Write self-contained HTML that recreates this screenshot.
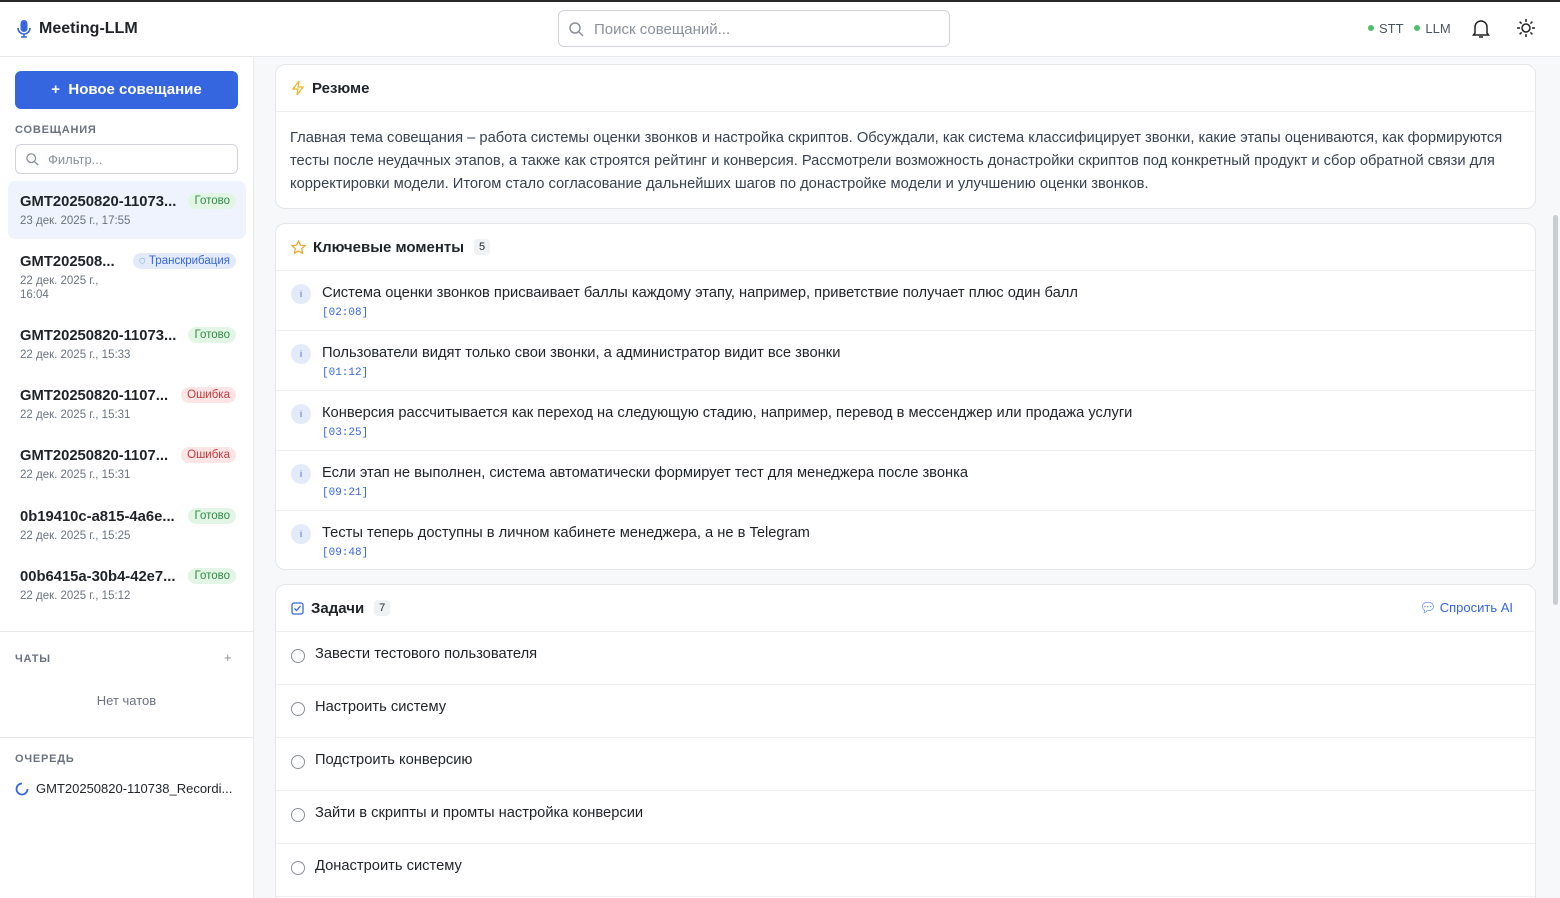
<!DOCTYPE html>
<html style="width:1560px;height:898px;overflow:hidden"><head><meta charset="utf-8"><style>
*{box-sizing:border-box;margin:0;padding:0}
body{width:1560px;height:898px;overflow:hidden;font-family:"Liberation Sans",sans-serif;background:#f7f8fa;color:#1f2328;position:relative}
.topline{position:absolute;left:0;top:0;width:1560px;height:2px;background:#2a2a2a}
.top{position:absolute;left:0;top:2px;width:1560px;height:55px;background:#fff;border-bottom:1px solid #e6e8eb}
.logo{position:absolute;left:17px;top:18px;font-size:16px;font-weight:bold;display:flex;align-items:center;gap:8px}
.search{position:absolute;left:558px;top:8px;width:392px;height:37px;border:1px solid #d0d4da;border-radius:6px;font-size:15px;color:#8a9099;padding:10px 0 0 35px}
.side{position:absolute;left:0;top:57px;width:254px;height:841px;background:#fff;border-right:1px solid #e6e8eb}
.btn{position:absolute;left:15px;top:14px;width:223px;height:38px;background:#3566e0;border-radius:6px;color:#fff;font-size:15px;font-weight:bold;text-align:center;line-height:38px}
.lbl{position:absolute;left:15px;font-size:11px;font-weight:bold;letter-spacing:.8px;color:#6b7280}
.filter{position:absolute;left:15px;top:87px;width:223px;height:30px;border:1px solid #d0d4da;border-radius:6px;font-size:13px;color:#8a9099;padding:7px 0 0 32px}
.item{position:absolute;left:8px;width:238px;height:58px;border-radius:7px}
.item .t{position:absolute;left:12px;top:13px;font-size:14.8px;font-weight:bold;color:#1f2328}
.item .d{position:absolute;left:12px;top:33px;font-size:11.5px;color:#6b7280;line-height:14px}
.badge{position:absolute;top:12px;right:10px;font-size:11.5px;padding:2px 6px;border-radius:9px}
.ok{background:#e3f6e6;color:#2f8a43}.err{background:#fde5e5;color:#c23b3b}.tr{background:#e3ebfb;color:#3566e0}
.card{position:absolute;left:275px;width:1261px;background:#fff;border:1px solid #e4e6ea;border-radius:10px;overflow:hidden}
.hd{height:47px;border-bottom:1px solid #eceef1;display:flex;align-items:center;padding-left:15px;font-size:15px;font-weight:bold;gap:7px;position:relative}
.cnt{font-size:11px;font-weight:normal;background:#f0f1f3;border-radius:4px;padding:2px 5px;margin-left:3px}
.km{height:60px;border-bottom:1px solid #eceef1;position:relative}
.km .i{position:absolute;left:15px;top:13px;width:20px;height:20px;border-radius:50%;background:#e3ebfb;color:#3566e0;font-size:9px;text-align:center;line-height:20px}
.km .x{position:absolute;left:46px;top:14px;font-size:14.7px}
.km .ts{position:absolute;left:46px;top:36px;font-size:11px;font-family:"Liberation Mono",monospace;color:#3566e0}
.task{height:53px;border-bottom:1px solid #eceef1;position:relative}
.task .c{position:absolute;left:15px;top:17px;width:14px;height:14px;border:1.5px solid #8a9099;border-radius:50%}
.task .x{position:absolute;left:39px;top:14px;font-size:14.7px}
</style></head><body>
<div class="topline"></div>
<div class="top">
<div class="logo"><svg width="14" height="18" viewBox="0 0 14 18"><rect x="3.5" y="0" width="7" height="12" rx="3.5" fill="#3566e0"/><path d="M1 8a6 6 0 0 0 12 0M7 14v3M4 17h6" stroke="#3566e0" stroke-width="1.6" fill="none"/></svg>Meeting-LLM</div>
<div class="search"><svg style="position:absolute;left:10px;top:11px" width="15" height="15" viewBox="0 0 15 15"><circle cx="6" cy="6" r="5" stroke="#8a9099" stroke-width="1.5" fill="none"/><path d="M10 10l4 4" stroke="#8a9099" stroke-width="1.5"/></svg>Поиск совещаний...</div>
<div style="position:absolute;left:1368px;top:19px;font-size:13px;color:#4b5563"><span style="display:inline-block;width:6px;height:6px;border-radius:50%;background:#4cc06a;margin-right:5px;vertical-align:2px"></span>STT&nbsp;&nbsp;&nbsp;<span style="display:inline-block;width:6px;height:6px;border-radius:50%;background:#4cc06a;margin-right:5px;vertical-align:2px"></span>LLM</div>
<svg style="position:absolute;left:1472px;top:17px" width="18" height="20" viewBox="0 0 18 20"><path d="M3 14V8a6 6 0 0 1 12 0v6l1.5 2h-15z M7 18h4" stroke="#222" stroke-width="1.5" fill="none"/></svg>
<svg style="position:absolute;left:1516px;top:16px" width="20" height="20" viewBox="0 0 20 20"><circle cx="10" cy="10" r="4" stroke="#222" stroke-width="1.5" fill="none"/><path d="M10 1v3M10 16v3M1 10h3M16 10h3M3.6 3.6l2 2M14.4 14.4l2 2M3.6 16.4l2-2M14.4 5.6l2-2" stroke="#222" stroke-width="1.5"/></svg>
</div>
<div class="side">
<div class="btn">+&nbsp; Новое совещание</div>
<div class="lbl" style="top:67px">СОВЕЩАНИЯ</div>
<div class="filter"><svg style="position:absolute;left:10px;top:8px" width="13" height="13" viewBox="0 0 15 15"><circle cx="6" cy="6" r="5" stroke="#8a9099" stroke-width="1.5" fill="none"/><path d="M10 10l4 4" stroke="#8a9099" stroke-width="1.5"/></svg>Фильтр...</div>
<div class="item" style="top:124px;background:#eef3fd"><div class="t">GMT20250820-11073...</div><div class="d">23 дек. 2025 г., 17:55</div><div class="badge ok">Готово</div></div>
<div class="item" style="top:184px;height:68px"><div class="t">GMT202508...</div><div class="d">22 дек. 2025 г.,<br>16:04</div><div class="badge tr">◌ Транскрибация</div></div>
<div class="item" style="top:258px"><div class="t">GMT20250820-11073...</div><div class="d">22 дек. 2025 г., 15:33</div><div class="badge ok">Готово</div></div>
<div class="item" style="top:318px"><div class="t">GMT20250820-1107...</div><div class="d">22 дек. 2025 г., 15:31</div><div class="badge err">Ошибка</div></div>
<div class="item" style="top:378px"><div class="t">GMT20250820-1107...</div><div class="d">22 дек. 2025 г., 15:31</div><div class="badge err">Ошибка</div></div>
<div class="item" style="top:439px"><div class="t">0b19410c-a815-4a6e...</div><div class="d">22 дек. 2025 г., 15:25</div><div class="badge ok">Готово</div></div>
<div class="item" style="top:499px"><div class="t">00b6415a-30b4-42e7...</div><div class="d">22 дек. 2025 г., 15:12</div><div class="badge ok">Готово</div></div>
<div style="position:absolute;left:0;top:574px;width:253px;border-top:1px solid #e6e8eb"></div>
<div class="lbl" style="top:596px">ЧАТЫ</div><div style="position:absolute;left:224px;top:593px;color:#8a9099;font-size:13px">+</div>
<div style="position:absolute;left:0;width:253px;top:636px;text-align:center;font-size:13px;color:#6b7280">Нет чатов</div>
<div style="position:absolute;left:0;top:680px;width:253px;border-top:1px solid #e6e8eb"></div>
<div class="lbl" style="top:696px">ОЧЕРЕДЬ</div>
<svg style="position:absolute;left:15px;top:725px" width="14" height="14" viewBox="0 0 14 14"><path d="M7 1.5A5.5 5.5 0 1 0 12.5 7" stroke="#3566e0" stroke-width="1.8" fill="none"/></svg>
<div style="position:absolute;left:36px;top:724px;font-size:13px">GMT20250820-110738_Recordi...</div>
</div>
<div class="card" style="top:64px;height:145px">
<div class="hd"><svg width="14" height="16" viewBox="0 0 14 16"><path d="M8 1L2 9h5l-1 6 6-8H7z" stroke="#f0b429" stroke-width="1.3" fill="none"/></svg>Резюме</div>
<div style="padding:15px 15px 0 14px;font-size:14.7px;line-height:23px;color:#374151">Главная тема совещания – работа системы оценки звонков и настройка скриптов. Обсуждали, как система классифицирует звонки, какие этапы оцениваются, как формируются тесты после неудачных этапов, а также как строятся рейтинг и конверсия. Рассмотрели возможность донастройки скриптов под конкретный продукт и сбор обратной связи для корректировки модели. Итогом стало согласование дальнейших шагов по донастройке модели и улучшению оценки звонков.</div>
</div>
<div class="card" style="top:223px;height:347px">
<div class="hd"><svg width="15" height="15" viewBox="0 0 16 16"><path d="M8 1l2.1 4.4 4.8.6-3.5 3.3.9 4.8L8 11.8 3.7 14.1l.9-4.8L1.1 6l4.8-.6z" stroke="#f0a429" stroke-width="1.3" fill="none"/></svg>Ключевые моменты<span class="cnt">5</span></div>
<div class="km"><div class="i">i</div><div class="x">Система оценки звонков присваивает баллы каждому этапу, например, приветствие получает плюс один балл</div><div class="ts">[02:08]</div></div>
<div class="km"><div class="i">i</div><div class="x">Пользователи видят только свои звонки, а администратор видит все звонки</div><div class="ts">[01:12]</div></div>
<div class="km"><div class="i">i</div><div class="x">Конверсия рассчитывается как переход на следующую стадию, например, перевод в мессенджер или продажа услуги</div><div class="ts">[03:25]</div></div>
<div class="km"><div class="i">i</div><div class="x">Если этап не выполнен, система автоматически формирует тест для менеджера после звонка</div><div class="ts">[09:21]</div></div>
<div class="km" style="border:0"><div class="i">i</div><div class="x">Тесты теперь доступны в личном кабинете менеджера, а не в Telegram</div><div class="ts">[09:48]</div></div>
</div>
<div class="card" style="top:584px;height:330px">
<div class="hd"><svg width="13" height="13" viewBox="0 0 13 13"><rect x="1" y="1" width="11" height="11" rx="2" stroke="#3566e0" stroke-width="1.3" fill="none"/><path d="M3.5 6.5l2 2 4-4.5" stroke="#3566e0" stroke-width="1.3" fill="none"/></svg>Задачи<span class="cnt">7</span>
<span style="position:absolute;right:22px;font-size:13px;font-weight:normal;color:#3566e0">💬︎ Спросить AI</span></div>
<div class="task"><div class="c"></div><div class="x">Завести тестового пользователя</div></div>
<div class="task"><div class="c"></div><div class="x">Настроить систему</div></div>
<div class="task"><div class="c"></div><div class="x">Подстроить конверсию</div></div>
<div class="task"><div class="c"></div><div class="x">Зайти в скрипты и промты настройка конверсии</div></div>
<div class="task"><div class="c"></div><div class="x">Донастроить систему</div></div>
</div>
<div style="position:absolute;left:1553px;top:215px;width:5px;height:390px;background:#c9ccd1;border-radius:3px"></div>
</body></html>
